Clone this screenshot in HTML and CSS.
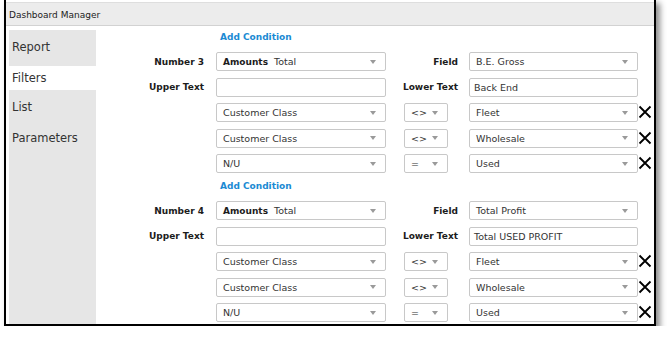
FILE: index.html
```html
<!DOCTYPE html>
<html lang="en">
<head>
    <meta charset="UTF-8">
    <title>Dashboard Manager</title>
    <link rel="stylesheet" href="styles.css">
</head>
<body>
    <div class="frame">
        <div class="titlebar">Dashboard Manager</div>
        <div class="frame-body">
            <nav class="sidebar">
                <div class="side-list">
                    <div class="side-item report">Report</div>
                    <div class="side-item filters active">Filters</div>
                    <div class="side-item list">List</div>
                    <div class="side-item params">Parameters</div>
                </div>
            </nav>
            <main class="pane">
                <!-- Number 3 -->
                <section class="block">
                    <a href="#" class="add-link">Add Condition</a>
                    <div class="grid">
                        <div class="lbl">Number 3</div>
                        <div class="sel"><b>Amounts</b>&nbsp; Total<span class="caret"></span></div>
                        <div class="lbl mid">Field</div>
                        <div class="sel">B.E. Gross<span class="caret"></span></div>
                        <div></div>

                        <div class="lbl">Upper Text</div>
                        <div class="inp"></div>
                        <div class="lbl mid">Lower Text</div>
                        <div class="inp">Back End</div>
                        <div></div>

                        <div></div>
                        <div class="sel">Customer Class<span class="caret"></span></div>
                        <div class="sel op">&lt;&gt;<span class="caret"></span></div>
                        <div class="sel">Fleet<span class="caret"></span></div>
                        <div class="del"><svg width="14" height="14" viewBox="0 0 14 14"><path d="M1.5 1.5L12.5 12.5M12.5 1.5L1.5 12.5" stroke="#000" stroke-width="1.8"/></svg></div>

                        <div></div>
                        <div class="sel">Customer Class<span class="caret"></span></div>
                        <div class="sel op">&lt;&gt;<span class="caret"></span></div>
                        <div class="sel">Wholesale<span class="caret"></span></div>
                        <div class="del"><svg width="14" height="14" viewBox="0 0 14 14"><path d="M1.5 1.5L12.5 12.5M12.5 1.5L1.5 12.5" stroke="#000" stroke-width="1.8"/></svg></div>

                        <div></div>
                        <div class="sel">N/U<span class="caret"></span></div>
                        <div class="sel op">=<span class="caret"></span></div>
                        <div class="sel">Used<span class="caret"></span></div>
                        <div class="del"><svg width="14" height="14" viewBox="0 0 14 14"><path d="M1.5 1.5L12.5 12.5M12.5 1.5L1.5 12.5" stroke="#000" stroke-width="1.8"/></svg></div>
                    </div>
                </section>

                <!-- Number 4 -->
                <section class="block second">
                    <a href="#" class="add-link">Add Condition</a>
                    <div class="grid">
                        <div class="lbl">Number 4</div>
                        <div class="sel"><b>Amounts</b>&nbsp; Total<span class="caret"></span></div>
                        <div class="lbl mid">Field</div>
                        <div class="sel">Total Profit<span class="caret"></span></div>
                        <div></div>

                        <div class="lbl">Upper Text</div>
                        <div class="inp"></div>
                        <div class="lbl mid">Lower Text</div>
                        <div class="inp">Total USED PROFIT</div>
                        <div></div>

                        <div></div>
                        <div class="sel">Customer Class<span class="caret"></span></div>
                        <div class="sel op">&lt;&gt;<span class="caret"></span></div>
                        <div class="sel">Fleet<span class="caret"></span></div>
                        <div class="del"><svg width="14" height="14" viewBox="0 0 14 14"><path d="M1.5 1.5L12.5 12.5M12.5 1.5L1.5 12.5" stroke="#000" stroke-width="1.8"/></svg></div>

                        <div></div>
                        <div class="sel">Customer Class<span class="caret"></span></div>
                        <div class="sel op">&lt;&gt;<span class="caret"></span></div>
                        <div class="sel">Wholesale<span class="caret"></span></div>
                        <div class="del"><svg width="14" height="14" viewBox="0 0 14 14"><path d="M1.5 1.5L12.5 12.5M12.5 1.5L1.5 12.5" stroke="#000" stroke-width="1.8"/></svg></div>

                        <div></div>
                        <div class="sel">N/U<span class="caret"></span></div>
                        <div class="sel op">=<span class="caret"></span></div>
                        <div class="sel">Used<span class="caret"></span></div>
                        <div class="del"><svg width="14" height="14" viewBox="0 0 14 14"><path d="M1.5 1.5L12.5 12.5M12.5 1.5L1.5 12.5" stroke="#000" stroke-width="1.8"/></svg></div>
                    </div>
                </section>
            </main>
        </div>
    </div>
</body>
</html>
```

FILE: styles.css
```css
body {
    margin: 0;
    padding: 0;
    background: #fff;
    font-family: "DejaVu Sans", Verdana, sans-serif;
    color: #333;
    overflow: hidden;
}
.frame {
    width: 648px;
    height: 324px;
    margin: -2px 0 0 4px;
    border: 2px solid #000;
    background: #fff;
    box-shadow: 4px 5px 6px rgba(0, 0, 0, 0.45);
    display: flex;
    flex-direction: column;
}
.titlebar {
    margin-top: 2px;
    height: 22px;
    line-height: 24px;
    padding-left: 3px;
    background: #ececec;
    border-top: 1px solid #dedede;
    border-bottom: 1px solid #d2d2d2;
    font-size: 9px;
    color: #222;
    overflow: hidden;
}
.frame-body {
    flex: 1;
    display: flex;
}
.sidebar {
    width: 90px;
    box-sizing: border-box;
    padding: 4px 0 0 3px;
    display: flex;
    flex-direction: column;
}
.side-list {
    flex: 1;
    background: #e6e6e6;
}
.side-item {
    padding-left: 3px;
    font-size: 11.5px;
    line-height: 14px;
    color: #333;
}
.side-item.report {
    padding-top: 10px;
    padding-bottom: 12px;
}
.side-item.filters {
    padding-top: 5px;
    padding-bottom: 5px;
}
.side-item.list {
    padding-top: 10px;
    padding-bottom: 6px;
}
.side-item.params {
    padding-top: 11px;
}
.side-item.active {
    background: #fff;
}
.pane {
    flex: 1;
    padding-top: 3px;
}
.block.second {
    margin-top: 5px;
}
.add-link {
    display: block;
    height: 16px;
    line-height: 16px;
    margin-bottom: 7px;
    padding-left: 124px;
    font-size: 9px;
    font-weight: bold;
    color: #1b8ad3;
    text-decoration: none;
}
.grid {
    display: grid;
    grid-template-columns: 120px 170px 83px 169px 16px;
    grid-auto-rows: 19px;
    row-gap: 6.5px;
}
.lbl {
    display: flex;
    align-items: center;
    justify-content: flex-end;
    padding-right: 12px;
    font-size: 9px;
    font-weight: bold;
    color: #1c1c1c;
}
.lbl.mid {
    padding-right: 11px;
}
.sel, .inp {
    box-sizing: border-box;
    height: 19px;
    border: 1px solid #c8c8c8;
    border-radius: 2px;
    background: #fff;
    display: flex;
    align-items: center;
    padding-left: 6px;
    font-size: 9.5px;
    color: #333;
    white-space: nowrap;
}
.sel b {
    color: #1c1c1c;
    font-size: 9px;
}
.inp {
    padding-left: 4px;
}
.sel.op {
    width: 44px;
    margin-left: 18px;
}
.caret {
    margin-left: auto;
    margin-right: 9px;
    width: 0;
    height: 0;
    border-left: 3px solid transparent;
    border-right: 3px solid transparent;
    border-top: 4px solid #9a9a9a;
}
.del {
    display: flex;
    align-items: center;
}
.del svg {
    display: block;
    margin-top: -1px;
}
```
